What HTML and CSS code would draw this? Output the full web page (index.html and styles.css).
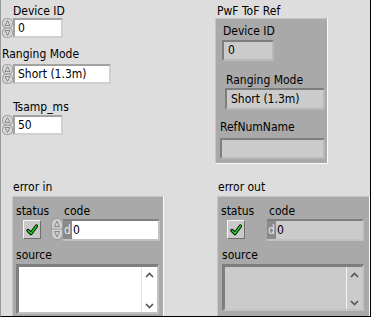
FILE: index.html
```html
<!DOCTYPE html>
<html lang="en">
<head>
    <meta charset="UTF-8">
    <title>PwF ToF Panel</title>
    <link rel="stylesheet" href="styles.css">
</head>
<body>
    <div class="panel">
        <div class="top">
            <div class="col-left">
                <div class="field field-id">
                    <div class="label">Device ID</div>
                    <div class="control">
                        <svg class="incdec" width="11" height="20" viewBox="0 0 11 20">
                            <rect x="0.5" y="0.5" width="10" height="9.5" rx="4" fill="#d6d6d6" stroke="#9c9c9c"/>
                            <rect x="0.5" y="10" width="10" height="9.5" rx="4" fill="#d6d6d6" stroke="#9c9c9c"/>
                            <path d="M5.5 2.5 L8 7.5 H3 Z" fill="none" stroke="#8a8a8a"/>
                            <path d="M3 12.5 H8 L5.5 17.5 Z" fill="none" stroke="#8a8a8a"/>
                        </svg>
                        <div class="box box-num">0</div>
                    </div>
                </div>

                <div class="field field-mode">
                    <div class="label">Ranging Mode</div>
                    <div class="control">
                        <svg class="incdec" width="11" height="20" viewBox="0 0 11 20">
                            <rect x="0.5" y="0.5" width="10" height="9.5" rx="4" fill="#d6d6d6" stroke="#9c9c9c"/>
                            <rect x="0.5" y="10" width="10" height="9.5" rx="4" fill="#d6d6d6" stroke="#9c9c9c"/>
                            <path d="M5.5 2.5 L8 7.5 H3 Z" fill="none" stroke="#8a8a8a"/>
                            <path d="M3 12.5 H8 L5.5 17.5 Z" fill="none" stroke="#8a8a8a"/>
                        </svg>
                        <div class="box box-ring">Short (1.3m)</div>
                    </div>
                </div>

                <div class="field field-ts">
                    <div class="label">Tsamp_ms</div>
                    <div class="control">
                        <svg class="incdec" width="11" height="20" viewBox="0 0 11 20">
                            <rect x="0.5" y="0.5" width="10" height="9.5" rx="4" fill="#d6d6d6" stroke="#9c9c9c"/>
                            <rect x="0.5" y="10" width="10" height="9.5" rx="4" fill="#d6d6d6" stroke="#9c9c9c"/>
                            <path d="M5.5 2.5 L8 7.5 H3 Z" fill="none" stroke="#8a8a8a"/>
                            <path d="M3 12.5 H8 L5.5 17.5 Z" fill="none" stroke="#8a8a8a"/>
                        </svg>
                        <div class="box box-num">50</div>
                    </div>
                </div>
            </div>

            <div class="col-right">
                <div class="label cluster-label">PwF ToF Ref</div>
                <div class="cluster ref">
                    <div class="label ref-id-label">Device ID</div>
                    <div class="ind ref-id">0</div>
                    <div class="label ref-mode-label">Ranging Mode</div>
                    <div class="ind ref-mode">Short (1.3m)</div>
                    <div class="label ref-name-label">RefNumName</div>
                    <div class="ind ref-name"></div>
                </div>
            </div>
        </div>

        <div class="bottom">
            <div class="err err-in">
                <div class="label err-label">error in</div>
                <div class="cluster err-box">
                    <div class="err-row">
                        <div class="status-col">
                            <div class="label">status</div>
                            <div class="check">
                                <svg width="12" height="12" viewBox="0 0 12 12">
                                    <path d="M2 6.5 L5 9.5 L10.5 2" fill="none" stroke="#000" stroke-width="3.2" stroke-linecap="round" stroke-linejoin="round"/>
                                    <path d="M2 6.5 L5 9.5 L10.5 2" fill="none" stroke="#19d419" stroke-width="1.6" stroke-linecap="round" stroke-linejoin="round"/>
                                </svg>
                            </div>
                        </div>
                        <div class="code-col">
                            <div class="label code-label">code</div>
                            <div class="control">
                                <svg class="incdec oval" width="12" height="22" viewBox="0 0 12 22">
                                    <rect x="0.5" y="0.5" width="11" height="21" rx="5.5" fill="#d0d0d0" stroke="#9a9a9a"/>
                                    <line x1="1" y1="11" x2="11" y2="11" stroke="#9a9a9a"/>
                                    <path d="M6 3 L8.5 8.5 H3.5 Z" fill="none" stroke="#8a8a8a"/>
                                    <path d="M3.5 13.5 H8.5 L6 19 Z" fill="none" stroke="#8a8a8a"/>
                                </svg>
                                <div class="code-box">
                                    <span class="radix">d</span>
                                    <span class="code-val">0</span>
                                </div>
                            </div>
                        </div>
                    </div>
                    <div class="label source-label">source</div>
                    <div class="source">
                        <div class="scroll">
                            <svg width="9" height="6" viewBox="0 0 9 6"><path d="M1 5 L4.5 1.5 L8 5" fill="none" stroke="#555" stroke-width="1.6"/></svg>
                            <svg width="9" height="6" viewBox="0 0 9 6"><path d="M1 1 L4.5 4.5 L8 1" fill="none" stroke="#555" stroke-width="1.6"/></svg>
                        </div>
                    </div>
                </div>
            </div>

            <div class="err err-out">
                <div class="label err-label">error out</div>
                <div class="cluster err-box">
                    <div class="err-row">
                        <div class="status-col">
                            <div class="label">status</div>
                            <div class="check">
                                <svg width="12" height="12" viewBox="0 0 12 12">
                                    <path d="M2 6.5 L5 9.5 L10.5 2" fill="none" stroke="#000" stroke-width="3.2" stroke-linecap="round" stroke-linejoin="round"/>
                                    <path d="M2 6.5 L5 9.5 L10.5 2" fill="none" stroke="#19d419" stroke-width="1.6" stroke-linecap="round" stroke-linejoin="round"/>
                                </svg>
                            </div>
                        </div>
                        <div class="code-col">
                            <div class="label code-label">code</div>
                            <div class="code-box">
                                <span class="radix">d</span>
                                <span class="code-val">0</span>
                            </div>
                        </div>
                    </div>
                    <div class="label source-label">source</div>
                    <div class="source">
                        <div class="scroll">
                            <svg width="9" height="6" viewBox="0 0 9 6"><path d="M1 5 L4.5 1.5 L8 5" fill="none" stroke="#555" stroke-width="1.6"/></svg>
                            <svg width="9" height="6" viewBox="0 0 9 6"><path d="M1 1 L4.5 4.5 L8 1" fill="none" stroke="#555" stroke-width="1.6"/></svg>
                        </div>
                    </div>
                </div>
            </div>
        </div>
    </div>
</body>
</html>
```

FILE: styles.css
```css
* {
    box-sizing: border-box;
    margin: 0;
    padding: 0;
}

body {
    background: #dddddd;
    font-family: "DejaVu Sans Condensed", "Liberation Sans", sans-serif;
    font-size: 12px;
    color: #000;
}

.panel {
    width: 371px;
    height: 317px;
    overflow: hidden;
    background: #dddddd;
    border-left: 1px solid #9a9a9a;
    border-right: 1px solid #000;
    border-bottom: 1px solid #000;
}

.label {
    height: 14px;
    line-height: 14px;
    white-space: nowrap;
}

/* top half */

.top {
    display: flex;
    height: 180px;
}

.col-left {
    width: 214px;
}

.control {
    display: flex;
    margin-left: 1px;
}

.incdec {
    display: block;
    flex: none;
}

.box {
    height: 20px;
    line-height: 16px;
    padding-left: 3px;
    background: #fff;
    border-top: 2px solid #a2a2a2;
    border-left: 2px solid #a2a2a2;
    border-right: 2px solid #d0d0d0;
    border-bottom: 2px solid #d0d0d0;
}

.box-num {
    width: 50px;
}

.box-ring {
    width: 98px;
}

.field-id {
    margin-top: 4px;
}

.field-id .label,
.field-ts .label {
    margin-left: 12px;
}

.field-mode {
    margin-top: 9px;
}

.field-mode .label {
    margin-left: 1px;
    margin-bottom: 3px;
}

.field-ts {
    margin-top: 16px;
}

.field-ts .label {
    margin-bottom: 1px;
}

.cluster-label {
    margin-top: 4px;
    margin-left: 2px;
}

.cluster {
    background: #a9a9a9;
    border-top: 1px solid #c6c6c6;
    border-left: 1px solid #c6c6c6;
    border-right: 1px solid #fafafa;
    border-bottom: 1px solid #fafafa;
}

.ref {
    width: 113px;
    height: 146px;
    overflow: hidden;
}

.ind {
    background: #cbcbcb;
    padding-left: 4px;
    line-height: 16px;
    border-top: 2px solid #7e7e7e;
    border-left: 2px solid #7e7e7e;
    border-right: 2px solid #b8b8b8;
    border-bottom: 2px solid #b8b8b8;
}

.ref-id-label {
    margin-top: 5px;
    margin-left: 7px;
}

.ref-id {
    margin-top: 2px;
    margin-left: 6px;
    width: 52px;
    height: 21px;
}

.ref-mode-label {
    margin-top: 12px;
    margin-left: 10px;
}

.ref-mode {
    margin-top: 1px;
    margin-left: 9px;
    width: 100px;
    height: 22px;
    line-height: 18px;
}

.ref-name-label {
    margin-top: 10px;
    margin-left: 4px;
}

.ref-name {
    margin-top: 4px;
    margin-left: 4px;
    width: 105px;
    height: 21px;
}

/* error clusters */

.bottom {
    display: flex;
}

.err-in {
    margin-left: 11px;
}

.err-out {
    margin-left: 53px;
}

.err-label {
    margin-left: 1px;
}

.err-box {
    margin-top: 2px;
    width: 153px;
    height: 130px;
}

.err-in .err-box {
    width: 152px;
}

.err-row {
    display: flex;
    margin-top: 7px;
}

.status-col {
    margin-left: 3px;
    width: 35px;
}

.err-out .status-col {
    width: 46px;
}

.check {
    margin-top: 2px;
    margin-left: 7px;
    width: 18px;
    height: 19px;
    display: flex;
    align-items: center;
    justify-content: center;
    background: #c9c9c9;
    border-top: 1px solid #f4f4f4;
    border-left: 1px solid #f4f4f4;
    border-right: 1px solid #6e6e6e;
    border-bottom: 1px solid #6e6e6e;
}

.err-out .check {
    margin-left: 6px;
}

.err-in .code-label {
    margin-left: 13px;
}

.err-out .code-label {
    margin-left: 2px;
}

.code-col .control {
    margin-left: 0;
    margin-top: 1px;
}

.oval {
    margin-top: -1px;
}

.code-box {
    display: flex;
    height: 22px;
    line-height: 18px;
    border-top: 2px solid #7e7e7e;
    border-bottom: 2px solid #c2c2c2;
    border-right: 2px solid #c2c2c2;
}

.err-in .code-box {
    width: 97px;
}

.err-out .code-box {
    margin-top: 1px;
    width: 97px;
}

.radix {
    width: 9px;
    background: #8a8a8a;
    color: #e6e6e6;
    padding-left: 1px;
}

.code-val {
    flex: 1;
    background: #fff;
    padding-left: 1px;
}

.err-out .code-val {
    background: #cbcbcb;
}

.source-label {
    margin-top: 7px;
    margin-left: 3px;
}

.err-out .source-label {
    margin-left: 4px;
}

.source {
    margin-top: 2px;
    margin-left: 3px;
    width: 143px;
    height: 50px;
    display: flex;
    justify-content: flex-end;
    background: #fff;
    border-top: 3px solid #7e7e7e;
    border-left: 3px solid #7e7e7e;
    border-right: 2px solid #c2c2c2;
    border-bottom: 2px solid #c2c2c2;
}

.err-out .source {
    margin-left: 4px;
    width: 142px;
    height: 47px;
    background: #cbcbcb;
}

.scroll {
    width: 16px;
    display: flex;
    flex-direction: column;
    justify-content: space-between;
    align-items: center;
    padding: 5px 0 3px;
    border-left: 1px solid #e4e4e4;
}

.err-out .scroll {
    border-left: 1px solid #f4f4f4;
}

.scroll svg {
    display: block;
}
```
